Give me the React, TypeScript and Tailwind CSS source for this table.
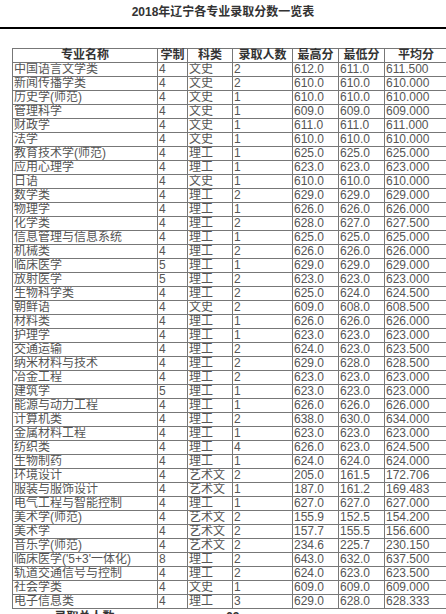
const rows: [string, string, string, string, string, string, string][] = [
  ["中国语言文学类", "4", "文史", "2", "612.0", "611.0", "611.500"],
  ["新闻传播学类", "4", "文史", "2", "610.0", "610.0", "610.000"],
  ["历史学(师范)", "4", "文史", "1", "610.0", "610.0", "610.000"],
  ["管理科学", "4", "文史", "1", "609.0", "609.0", "609.000"],
  ["财政学", "4", "文史", "1", "611.0", "611.0", "611.000"],
  ["法学", "4", "文史", "1", "610.0", "610.0", "610.000"],
  ["教育技术学(师范)", "4", "理工", "1", "625.0", "625.0", "625.000"],
  ["应用心理学", "4", "理工", "1", "623.0", "623.0", "623.000"],
  ["日语", "4", "文史", "1", "610.0", "610.0", "610.000"],
  ["数学类", "4", "理工", "2", "629.0", "629.0", "629.000"],
  ["物理学", "4", "理工", "1", "626.0", "626.0", "626.000"],
  ["化学类", "4", "理工", "2", "628.0", "627.0", "627.500"],
  ["信息管理与信息系统", "4", "理工", "1", "625.0", "625.0", "625.000"],
  ["机械类", "4", "理工", "2", "626.0", "626.0", "626.000"],
  ["临床医学", "5", "理工", "1", "629.0", "629.0", "629.000"],
  ["放射医学", "5", "理工", "2", "623.0", "623.0", "623.000"],
  ["生物科学类", "4", "理工", "2", "625.0", "624.0", "624.500"],
  ["朝鲜语", "4", "文史", "2", "609.0", "608.0", "608.500"],
  ["材料类", "4", "理工", "1", "626.0", "626.0", "626.000"],
  ["护理学", "4", "理工", "1", "623.0", "623.0", "623.000"],
  ["交通运输", "4", "理工", "2", "624.0", "623.0", "623.500"],
  ["纳米材料与技术", "4", "理工", "2", "629.0", "628.0", "628.500"],
  ["冶金工程", "4", "理工", "2", "623.0", "623.0", "623.000"],
  ["建筑学", "5", "理工", "1", "623.0", "623.0", "623.000"],
  ["能源与动力工程", "4", "理工", "1", "626.0", "626.0", "626.000"],
  ["计算机类", "4", "理工", "2", "638.0", "630.0", "634.000"],
  ["金属材料工程", "4", "理工", "1", "623.0", "623.0", "623.000"],
  ["纺织类", "4", "理工", "4", "626.0", "623.0", "624.500"],
  ["生物制药", "4", "理工", "1", "624.0", "624.0", "624.000"],
  ["环境设计", "4", "艺术文", "2", "205.0", "161.5", "172.706"],
  ["服装与服饰设计", "4", "艺术文", "1", "187.0", "161.2", "169.483"],
  ["电气工程与智能控制", "4", "理工", "1", "627.0", "627.0", "627.000"],
  ["美术学(师范)", "4", "艺术文", "2", "155.9", "152.5", "154.200"],
  ["美术学", "4", "艺术文", "2", "157.7", "155.5", "156.600"],
  ["音乐学(师范)", "4", "艺术文", "2", "234.6", "225.7", "230.150"],
  ["临床医学('5+3'一体化)", "8", "理工", "2", "643.0", "632.0", "637.500"],
  ["轨道交通信号与控制", "4", "理工", "2", "624.0", "623.0", "623.500"],
  ["社会学类", "4", "文史", "1", "609.0", "609.0", "609.000"],
  ["电子信息类", "4", "理工", "3", "629.0", "628.0", "628.333"],
];

const headers = ["专业名称", "学制", "科类", "录取人数", "最高分", "最低分", "平均分"];
const widths = ["w-[145px]", "w-[30px]", "w-[45px]", "w-[60px]", "w-[46px]", "w-[46px]", "w-[63px]"];

export default function App() {
  return (
    <div
      className="w-[446px] h-[614px] overflow-hidden bg-white text-[#555]"
      style={{ fontFamily: '"Liberation Sans", "Noto Sans CJK SC", sans-serif' }}
    >
      {/* Title */}
      <h1 className="pt-[4px] h-[27px] text-center text-[12px] leading-[16px] font-bold text-[#333]">
        2018年辽宁各专业录取分数一览表
      </h1>
      <div className="h-[2px] bg-black" />

      <div className="pl-[12px] pt-[19px]">
        <table className="border-collapse table-fixed w-[435px] text-[12px] leading-[13px]">
          <thead>
            <tr className="h-[14px]">
              {headers.map((h, i) => (
                <th key={h} className={`${widths[i]} border border-[#777] p-0 text-center font-bold text-[#333]`}>
                  {h}
                </th>
              ))}
            </tr>
          </thead>
          <tbody>
            {rows.map(r => (
              <tr key={r[0]} className="h-[14px]">
                {r.map((c, i) => (
                  <td key={i} className="border border-[#777] p-0 pl-[1px] whitespace-nowrap overflow-hidden">
                    {c}
                  </td>
                ))}
              </tr>
            ))}
          </tbody>
        </table>

        {/* Total row, cut off by the window */}
        <div className="flex text-[12px] leading-[13px] font-bold text-[#333] pt-[2px]">
          <span className="w-[145px] text-center">录取总人数</span>
          <span className="ml-[69px]">63</span>
        </div>
      </div>
    </div>
  );
}
